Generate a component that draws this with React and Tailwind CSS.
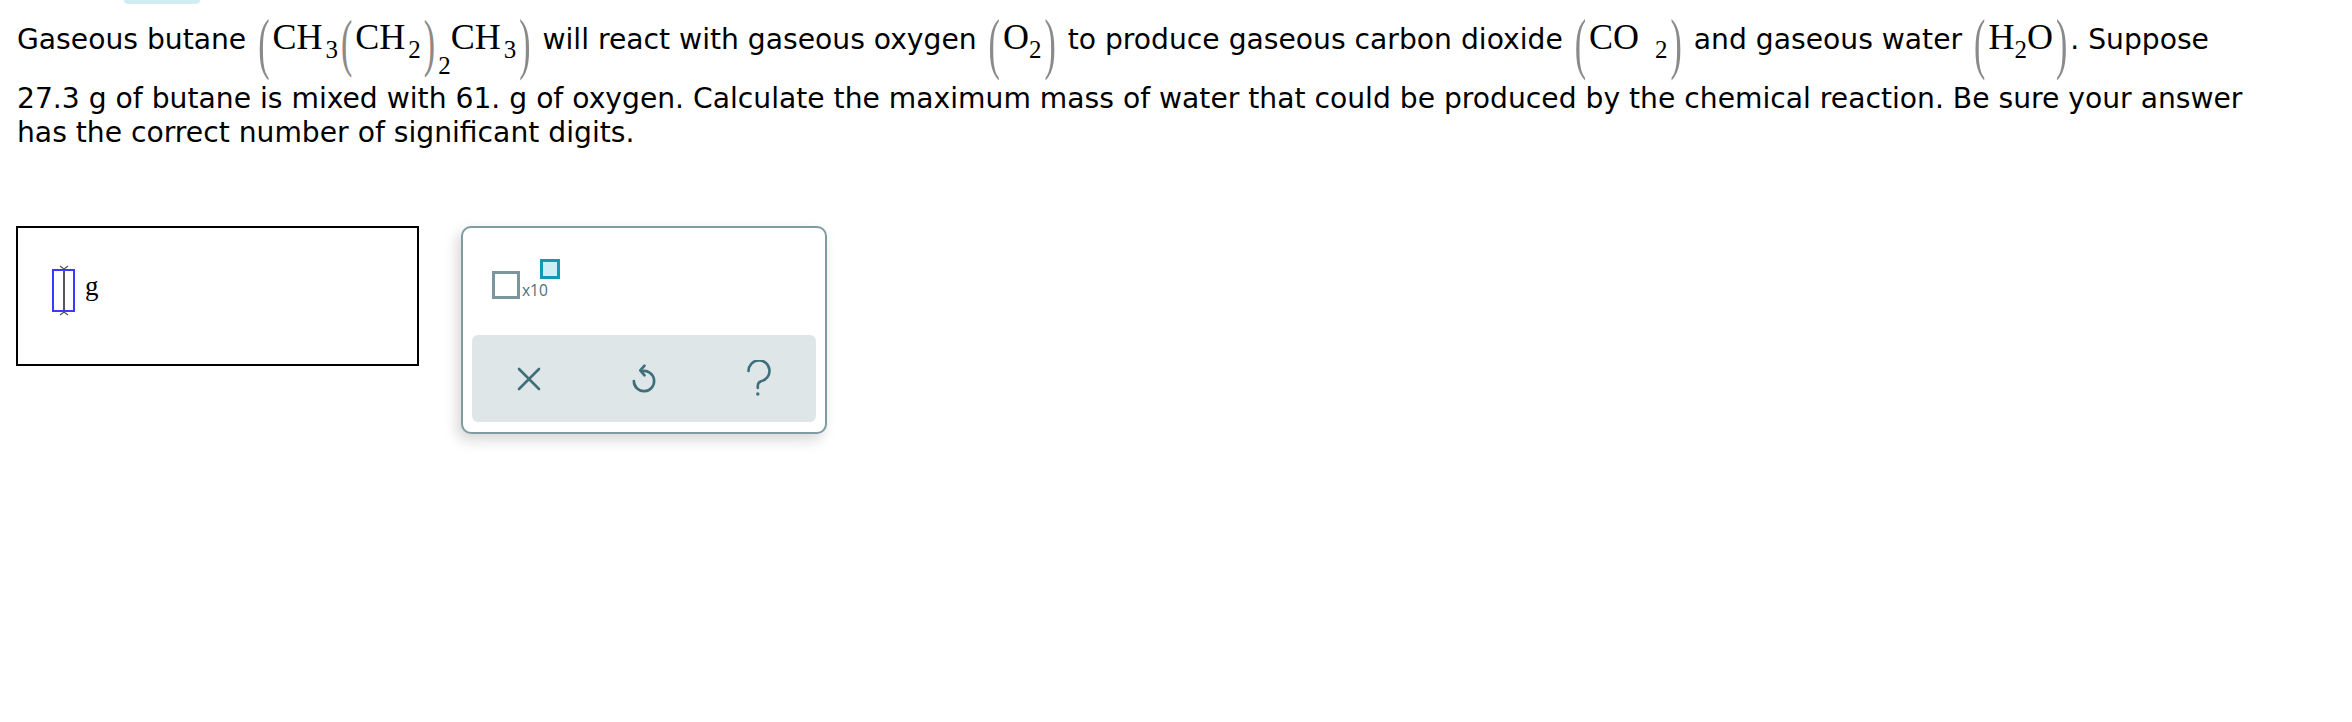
import React from "react";

const SANS = { fontFamily: '"DejaVu Sans", Verdana, sans-serif' };
const SERIF = { fontFamily: '"Liberation Serif", "Times New Roman", serif' };

function Paren({ ch, inner = false }) {
  return (
    <span
      className={`inline-block text-[#8a8a8a] text-[34px] leading-none ${inner ? "scale-y-[1.85] translate-y-[6px]" : "scale-y-[2] translate-y-[6px]"} mx-[3px]`}
      style={SERIF}
    >
      {ch}
    </span>
  );
}

function Sub({ children, low = false, gap = 0 }) {
  const ml = gap === 16 ? "ml-[16px]" : gap === 3 ? "ml-[3px]" : "";
  return (
    <span className={`text-[25px] leading-none ${low ? "align-[-25px]" : "align-[-9px]"} ${ml}`}>{children}</span>
  );
}

function F({ children }) {
  return (
    <span className="text-[36px] text-black" style={SERIF}>
      {children}
    </span>
  );
}

function UndoIcon() {
  return (
    <svg width="30" height="32" viewBox="0 0 28 30" fill="none" stroke="#3f6f7b" strokeWidth="2.5" strokeLinecap="round" strokeLinejoin="round">
      <path d="M12.5 7.5 A9.5 9.5 0 1 1 4.5 17" />
      <path d="M14.5 2.5 L10.5 7 L14.5 11.5" />
    </svg>
  );
}

function XIcon() {
  return (
    <svg width="24" height="24" viewBox="0 0 24 24" fill="none" stroke="#3f6f7b" strokeWidth="2.6" strokeLinecap="round">
      <path d="M2 2 L22 22 M22 2 L2 22" />
    </svg>
  );
}

function HelpIcon() {
  return (
    <svg width="28" height="38" viewBox="0 0 28 38" fill="none" stroke="#3f6f7b" strokeWidth="2.6" strokeLinecap="round" strokeLinejoin="round">
      <path d="M3.5 11 A10.5 10.5 0 1 1 16 21.2 C14 22 12.8 23.2 12.8 25.5 L12.8 28" />
      <circle cx="12.8" cy="34" r="1.7" fill="#3f6f7b" stroke="none" />
    </svg>
  );
}

function Cursor() {
  return (
    <div className="flex flex-col items-center">
      <svg width="12" height="5" viewBox="0 0 12 5" className="-mb-[1px]">
        <path d="M2 1 L6 4 L10 1" stroke="#555" strokeWidth="1.2" fill="none" />
      </svg>
      <div className="w-[23px] h-[43px] border-2 border-[#3a3aff] flex justify-center">
        <div className="w-[2px] h-full bg-[#555]" />
      </div>
      <svg width="12" height="5" viewBox="0 0 12 5" className="-mt-[1px]">
        <path d="M2 4 L6 1 L10 4" stroke="#555" strokeWidth="1.2" fill="none" />
      </svg>
    </div>
  );
}

export default function App() {
  return (
    <div className="w-[2352px] h-[722px] bg-white text-black overflow-hidden" style={SANS}>
      <div className="pl-[17px]">
        <div className="h-[4px] w-[76px] ml-[107px] rounded-b-[8px] bg-[#cfeef4]" />
        <div className="whitespace-nowrap text-[28.2px] leading-[40px] pt-[13px] h-[76px]">
          <span>Gaseous butane </span>
          <Paren ch="(" />
          <F>
            CH<Sub gap={3}>3</Sub>
            <Paren ch="(" inner />
            CH<Sub gap={3}>2</Sub>
            <Paren ch=")" inner />
            <Sub low>2</Sub>
            CH<Sub gap={3}>3</Sub>
          </F>
          <Paren ch=")" />
          <span> will react with gaseous oxygen </span>
          <Paren ch="(" />
          <F>
            O<Sub>2</Sub>
          </F>
          <Paren ch=")" />
          <span> to produce gaseous carbon dioxide </span>
          <Paren ch="(" />
          <F>
            CO<Sub gap={16}>2</Sub>
          </F>
          <Paren ch=")" />
          <span> and gaseous water </span>
          <Paren ch="(" />
          <F>
            H<Sub>2</Sub>O
          </F>
          <Paren ch=")" />
          <span>. Suppose</span>
        </div>
        <div className="whitespace-nowrap text-[28.2px] leading-[34px] mt-[2px]">
          27.3 g of butane is mixed with 61. g of oxygen. Calculate the maximum mass of water that could be produced by the chemical reaction. Be sure your answer
          <br />
          has the correct number of significant digits.
        </div>
      </div>

      <div className="flex items-start pl-[16px] mt-[76px]">
        <div className="w-[403px] h-[140px] border-2 border-black flex items-center pl-[34px] pb-[12px]">
          <Cursor />
          <span className="ml-[10px] mb-[8px] text-[27px]" style={SERIF}>g</span>
        </div>

        <div className="ml-[42px] w-[366px] h-[208px] rounded-[10px] border-2 border-[#7f9ba2] bg-white shadow-[-4px_6px_14px_rgba(0,0,0,0.16)] flex flex-col px-[9px] pb-[10px]">
          <div className="flex-1 flex items-start pt-[31px] pl-[20px]">
            <div className="relative flex items-end">
              <div className="w-[28px] h-[28px] border-[3px] border-[#7b969d] mt-[12px]" />
              <span className="text-[15.5px] font-medium leading-none text-[#4e6f78] ml-[2px] mb-[1px]" style={{ fontFamily: '"Open Sans", sans-serif' }}>x10</span>
              <div className="absolute left-[48px] top-0 w-[20px] h-[20px] border-[3px] border-[#0f9ab3] bg-[#cdeef4]" />
            </div>
          </div>
          <div className="h-[87px] rounded-[6px] bg-[#dfe6e8] grid grid-cols-3 items-center justify-items-center">
            <XIcon />
            <UndoIcon />
            <HelpIcon />
          </div>
        </div>
      </div>
    </div>
  );
}
